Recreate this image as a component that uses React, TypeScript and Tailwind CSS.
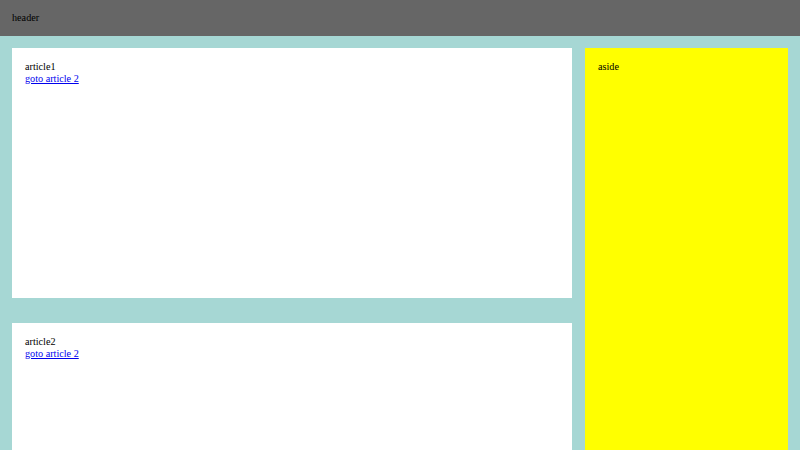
export default function App() {
    return (
        <div className="min-h-[450px] bg-[#a6d7d4] font-['Liberation_Serif',serif] text-[10.2px] leading-[12px] text-black">
            <header className="flex h-[36px] items-center bg-[#666666] px-[12px]">header</header>
            <main className="flex gap-[13px] px-[12px] pt-[12px]">
                <div className="flex flex-1 flex-col gap-[25px]">
                    <article className="h-[250px] bg-white p-[13px]">
                        <div>article1</div>
                        <a href="#article2" className="text-[#0000ee] underline">goto article 2</a>
                    </article>
                    <article id="article2" className="h-[250px] bg-white p-[13px]">
                        <div>article2</div>
                        <a href="#article2" className="text-[#0000ee] underline">goto article 2</a>
                    </article>
                </div>
                <aside className="w-[203px] bg-[#ffff00] p-[13px]">aside</aside>
            </main>
        </div>
    );
}
